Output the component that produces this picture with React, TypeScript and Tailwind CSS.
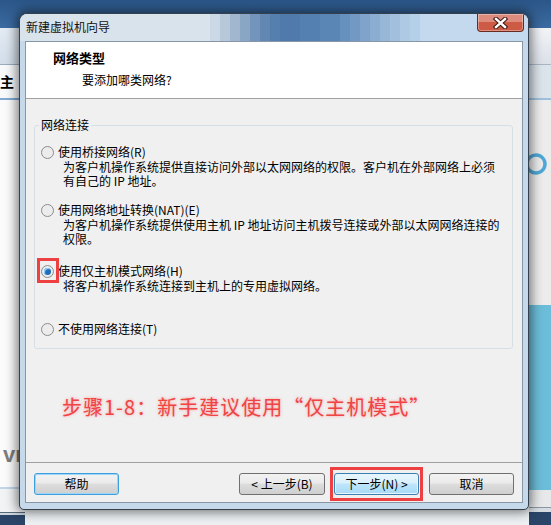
import React from "react";

const cjk = "font-['Noto_Sans_CJK_SC','Microsoft_YaHei',sans-serif]";

// glass tint steps across the title bar (solid steps, left to right)
const tint = [
  "w-[10px] bg-[#cbd8e5]",
  "w-[10px] bg-[#b6c8da]",
  "w-[10px] bg-[#a0b7cf]",
  "w-[10px] bg-[#8aa6c5]",
  "w-[10px] bg-[#7495bb]",
  "w-[10px] bg-[#6187b2]",
  "w-[10px] bg-[#5580ae]",
  "w-[20px] bg-[#4f7aab]",
  "w-[20px] bg-[#5380b0]",
  "w-[20px] bg-[#5a86b5]",
  "w-[10px] bg-[#6690bd]",
  "w-[10px] bg-[#7299c4]",
  "w-[10px] bg-[#7fa3ca]",
  "w-[10px] bg-[#8badd1]",
  "w-[10px] bg-[#97b7d7]",
  "w-[10px] bg-[#a2c0dd]",
  "w-[10px] bg-[#adc9e3]",
  "w-[10px] bg-[#b4cfe8]",
];

type RadioProps = {
  checked?: boolean;
  marked?: boolean;
};

const Radio = ({ checked, marked }: RadioProps) => (
  <span className="relative flex h-[13px] w-[13px] shrink-0 items-center justify-center rounded-full border border-[#8c8c8c] bg-[#ececec]">
    {checked && <span className="h-[7px] w-[7px] rounded-full bg-[#1f6cb8] shadow-[inset_1px_1px_1px_#9fdcff]" />}
    {/* red annotation box */}
    {marked && (
      <span className="absolute -top-[8px] -bottom-[6px] -left-[5px] -right-[6px] border-[3px] border-[#ee4040]" />
    )}
  </span>
);

const options = [
  {
    label: "使用桥接网络(R)",
    desc: [
      "为客户机操作系统提供直接访问外部以太网网络的权限。客户机在外部网络上必须",
      "有自己的 IP 地址。",
    ],
    gap: "mt-[12px]",
  },
  {
    label: "使用网络地址转换(NAT)(E)",
    desc: [
      "为客户机操作系统提供使用主机 IP 地址访问主机拨号连接或外部以太网网络连接的",
      "权限。",
    ],
    gap: "mt-[14px]",
  },
  {
    label: "使用仅主机模式网络(H)",
    desc: ["将客户机操作系统连接到主机上的专用虚拟网络。"],
    gap: "mt-[17px]",
    checked: true,
  },
  {
    label: "不使用网络连接(T)",
    desc: [],
    gap: "mt-[28px]",
  },
];

type BtnProps = {
  text: string;
  width: string;
  variant?: "focus" | "primary";
  marked?: boolean;
};

const WinButton = ({ text, width, variant, marked }: BtnProps) => {
  let look =
    "border-[#707070] bg-[linear-gradient(to_bottom,#f2f2f2_0%,#ebebeb_45%,#dddddd_50%,#cfcfcf_100%)]";
  if (variant === "focus")
    look =
      "border-[#3c9fe0] bg-[linear-gradient(to_bottom,#f2f2f2_0%,#ebebeb_45%,#dddddd_50%,#cfcfcf_100%)] shadow-[inset_0_0_0_1px_#9fd6f7]";
  if (variant === "primary")
    look =
      "border-[#3c7fb1] bg-[linear-gradient(to_bottom,#eaf6fd_0%,#d9f0fc_45%,#bee6fd_50%,#a7d9f5_100%)] shadow-[inset_0_0_0_1px_#e6f5fd]";
  return (
    <button
      className={`relative flex h-[22px] ${width} shrink-0 items-center justify-center rounded-[3px] border text-[12px] leading-[14px] text-black ${look}`}
    >
      {text}
      {marked && (
        <span className="absolute -top-[7px] -bottom-[7px] -left-[5px] -right-[5px] border-[3px] border-[#ee4040]" />
      )}
    </button>
  );
};

export default function App() {
  return (
    <div className={`relative flex h-[525px] w-[551px] overflow-hidden bg-[#eef1f4] ${cjk}`}>
      {/* desktop behind: left strip */}
      <div className="flex w-[25px] shrink-0 flex-col">
        <div className="h-[28px] bg-[linear-gradient(to_bottom,#2b5688,#3b6ba1)]" />
        <div className="h-[37px] border-b border-[#9aabbd] bg-[linear-gradient(to_bottom,#e3ebf3,#d2dde9)]" />
        <div className="h-[33px] bg-[#f7f9fb] text-[14px] leading-[33px] font-bold text-black">
          主页
        </div>
        <div className="h-[2px] bg-[#7fa9d3]" />
        <div className="flex flex-1 justify-between bg-[#fbfbfb]">
          <div className="flex flex-col pt-[342px] pl-[3px] font-['Liberation_Sans',sans-serif] text-[22px] leading-[26px] font-bold text-[#7d7d7d]">
            vm
          </div>
          <div className="w-[3px] bg-[#d8e6f3]" />
        </div>
        <div className="h-[2px] bg-[#c2d6ea]" />
        <div className="h-[23px] bg-[#f1f3f5]" />
        <div className="h-[1px] bg-[#5a6a7a]" />
        <div className="h-[2px] bg-[#d0d8e0]" />
        <div className="h-[10px] bg-[#2a4568]" />
      </div>

      {/* desktop behind: middle */}
      <div className="flex flex-1 flex-col">
        <div className="h-[28px] bg-[linear-gradient(to_bottom,#2b5688,#3b6ba1)]" />
        <div className="flex-1 bg-[#eef1f4]" />
      </div>

      {/* desktop behind: right strip */}
      <div className="flex w-[22px] shrink-0 flex-col">
        <div className="h-[28px] bg-[linear-gradient(to_bottom,#2b5688,#3b6ba1)]" />
        <div className="h-[37px] border-b border-[#a8b6c4] bg-[linear-gradient(to_bottom,#f1f3f6,#dbe1e8)]" />
        <div className="h-[33px] bg-[#dbe3eb]" />
        <div className="h-[2px] bg-[#9fc0dc]" />
        <div className="flex h-[205px] flex-col bg-[#ececec]">
          <svg width="22" height="40" viewBox="0 0 22 40" className="mt-[44px]">
            <circle cx="7" cy="20" r="9" fill="none" stroke="#4fa8d8" strokeWidth="3.5" />
          </svg>
        </div>
        <div className="flex-1 bg-[#6cbdda]" />
        <div className="h-[17px] bg-[#e6e8ea]" />
        <div className="h-[1px] bg-[#8a96a2]" />
        <div className="h-[4px] bg-[#d6dce2]" />
        <div className="h-[13px] bg-[#2a4568]" />
      </div>

      {/* dialog window on the desktop */}
      <div className="absolute top-[13px] left-[19px] flex h-[497px] w-[510px] flex-col rounded-t-[8px] rounded-b-[5px] border border-[#34404e] bg-[#c6d9eb] shadow-[0_0_12px_2px_rgba(0,0,0,0.55)]">
        {/* title bar */}
        <div className="flex h-[27px] shrink-0 items-stretch overflow-hidden rounded-t-[7px] bg-[#d9e3ec]">
          <span className="w-[190px] shrink-0 pt-[5px] pl-[6px] text-[12px] leading-[16px] text-[#111]">
            新建虚拟机向导
          </span>
          {tint.map((t, i) => (
            <span key={i} className={`shrink-0 ${t}`} />
          ))}
          <span className="flex flex-1 items-start justify-end bg-[#c4d9ed] pr-[4px]">
            <button className="flex h-[18px] w-[47px] items-center justify-center rounded-b-[4px] border border-t-0 border-[#6b2a20] bg-[#cd5a44] shadow-[inset_0_8px_0_rgba(255,255,255,0.3),inset_0_0_0_1px_rgba(255,255,255,0.35)]">
              <svg width="15" height="12" viewBox="0 0 15 12">
                <path d="M3 2 L12 10 M12 2 L3 10" stroke="#3b1510" strokeWidth="4.4" strokeLinecap="square" />
                <path d="M3 2 L12 10 M12 2 L3 10" stroke="#ffffff" strokeWidth="2.4" strokeLinecap="square" />
              </svg>
            </button>
          </span>
        </div>

        {/* client area */}
        <div className="mx-[5px] mb-[6px] flex flex-1 flex-col border border-[#8797a8] bg-[#f0f0f0] text-[12px] text-black">
          {/* header */}
          <div className="flex h-[57px] shrink-0 flex-col border-b border-[#a0a0a0] bg-white pt-[9px]">
            <p className="pl-[27px] text-[13px] leading-[14px] font-bold">网络类型</p>
            <p className="mt-[8px] pl-[56px] leading-[14px]">要添加哪类网络?</p>
          </div>

          {/* body */}
          <div className="flex flex-1 flex-col">
            <div className="mt-[26px] ml-[8px] mr-[9px] flex flex-col rounded-[3px] border border-[#d5dfe5] pb-[11px]">
              <div className="-mt-[8px] ml-[4px] w-fit bg-[#f0f0f0] px-[2px] leading-[14px]">
                网络连接
              </div>
              {options.map((o) => (
                <div key={o.label} className={`${o.gap} flex flex-col`}>
                  <div className="flex h-[16px] items-center pl-[6px]">
                    <Radio checked={o.checked} marked={o.checked} />
                    <span className="ml-[4px] leading-[16px]">{o.label}</span>
                  </div>
                  {o.desc.map((d) => (
                    <p key={d} className="pl-[28px] leading-[14px] whitespace-nowrap">
                      {d}
                    </p>
                  ))}
                </div>
              ))}
            </div>

            <p className="mt-[44px] ml-[36px] text-[20px] leading-[28px] tracking-[1px] text-[#f04444] [text-shadow:0_0_3px_rgba(255,90,90,0.55)]">
              步骤1-8：新手建议使用“仅主机模式”
            </p>
          </div>

          {/* footer */}
          <div className="flex h-[40px] shrink-0 items-start border-t border-[#a0a0a0] px-[8px] pt-[10px]">
            <WinButton text="帮助" width="w-[85px]" variant="focus" />
            <div className="ml-auto flex gap-[9px]">
              <WinButton text="< 上一步(B)" width="w-[86px]" />
              <div className="flex gap-[10px]">
                <WinButton text="下一步(N) >" width="w-[85px]" variant="primary" marked />
                <WinButton text="取消" width="w-[85px]" />
              </div>
            </div>
          </div>
        </div>
      </div>
    </div>
  );
}
